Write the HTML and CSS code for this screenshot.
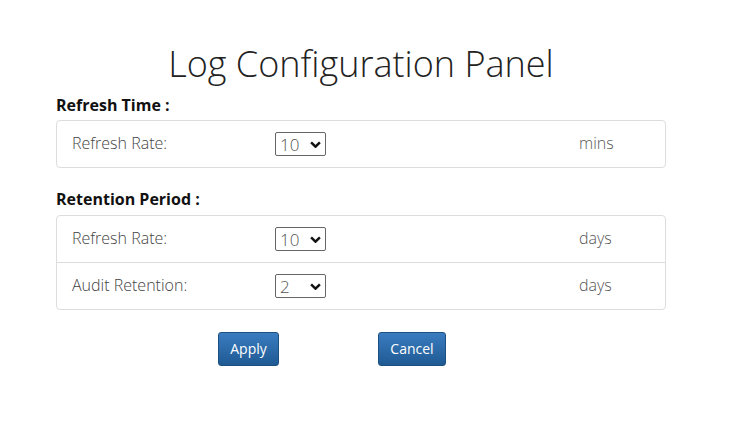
FILE: index.html
```html
<!DOCTYPE html>
<html>
<head>
<meta charset="utf-8">
<link rel="stylesheet" href="styles.css">
</head>
<body>
<div class="page">
  <h1 class="title">Log Configuration Panel</h1>
  <div class="section-title">Refresh Time :</div>
  <div class="panel">
    <div class="row">
      <span class="label">Refresh Rate:</span>
      <span class="select"><span class="val">10</span><svg class="chev" viewBox="0 0 10 6" width="11" height="7"><path d="M1 1 L5 5 L9 1" fill="none" stroke="#111" stroke-width="2.2"/></svg></span>
      <span class="unit">mins</span>
    </div>
  </div>
  <div class="section-title second">Retention Period :</div>
  <div class="panel">
    <div class="row">
      <span class="label">Refresh Rate:</span>
      <span class="select"><span class="val">10</span><svg class="chev" viewBox="0 0 10 6" width="11" height="7"><path d="M1 1 L5 5 L9 1" fill="none" stroke="#111" stroke-width="2.2"/></svg></span>
      <span class="unit">days</span>
    </div>
    <div class="row">
      <span class="label">Audit Retention:</span>
      <span class="select"><span class="val">2</span><svg class="chev" viewBox="0 0 10 6" width="11" height="7"><path d="M1 1 L5 5 L9 1" fill="none" stroke="#111" stroke-width="2.2"/></svg></span>
      <span class="unit">days</span>
    </div>
  </div>
  <div class="actions">
    <button class="btn apply">Apply</button>
    <button class="btn cancel">Cancel</button>
  </div>
</div>
</body>
</html>
```
FILE: styles.css
```css
html, body {
  margin: 0;
  padding: 0;
  background: #fff;
}
body {
  font-family: "Open Sans", "Noto Sans", sans-serif;
  color: #333;
}
.page {
  width: 610px;
  margin-left: 56px;
  padding-top: 39px;
}
.title {
  margin: 0;
  text-align: center;
  font-weight: 300;
  font-size: 36px;
  line-height: 50px;
  color: #222;
}
.section-title {
  font-weight: 700;
  font-size: 16px;
  line-height: 20px;
  color: #111;
  margin-top: 6px;
  margin-bottom: 5px;
}
.section-title.second {
  margin-top: 21px;
  margin-bottom: 6px;
}
.panel {
  border: 1px solid #ddd;
  border-radius: 4px;
  background: #fff;
}
.row {
  display: grid;
  grid-template-columns: 203px 304px 1fr;
  align-items: center;
  height: 46px;
  padding-left: 15px;
  font-size: 16px;
  font-weight: 300;
  color: #444;
}
.row + .row {
  border-top: 1px solid #ddd;
}
.label,
.unit {
  padding-bottom: 3px;
}
.select {
  box-sizing: border-box;
  width: 51px;
  height: 24px;
  border: 1px solid #666;
  border-radius: 2px;
  display: flex;
  align-items: center;
  justify-content: space-between;
  padding: 0 4px 0 4px;
  font-size: 17px;
  color: #555;
}
.chev {
  display: block;
}
.unit {
  color: #555;
}
.actions {
  display: flex;
  margin-top: 22px;
  padding-left: 162px;
}
.btn {
  font-family: "Open Sans", "Noto Sans", sans-serif;
  font-size: 14px;
  color: #fff;
  height: 34px;
  border: 1px solid #1d4f80;
  border-radius: 3px;
  background: linear-gradient(#3a7cc0, #1f5a93);
  padding: 0 0 2px;
  cursor: pointer;
}
.apply {
  width: 61px;
}
.cancel {
  width: 68px;
  margin-left: 99px;
}
```
